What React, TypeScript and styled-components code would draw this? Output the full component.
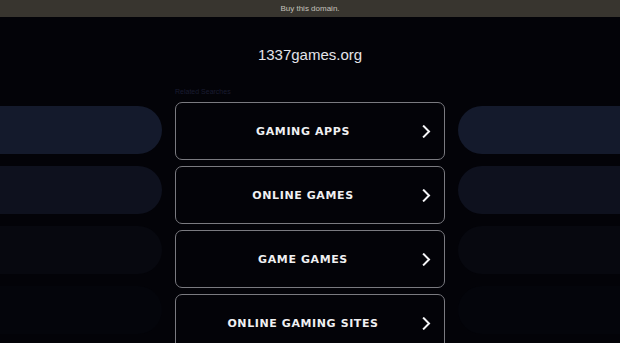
import React from "react";
import styled, { createGlobalStyle } from "styled-components";

const GlobalStyle = createGlobalStyle`
  html, body {
    margin: 0;
    padding: 0;
    background: #030308;
    overflow: hidden;
  }
  body {
    font-family: "Liberation Sans", Arial, sans-serif;
  }
`;

const Page = styled.div`
  width: 620px;
  height: 343px;
  background: #030308;
  overflow: hidden;
`;

const TopBar = styled.div`
  height: 17px;
  background: #38352f;
  color: #c4c2bd;
  font-size: 8px;
  line-height: 17px;
  text-align: center;
`;

const Header = styled.header`
  height: 69px;
  padding-top: 29px;
  box-sizing: border-box;
  text-align: center;
`;

const Domain = styled.h1`
  margin: 0;
  font-size: 15px;
  line-height: 18px;
  font-weight: normal;
  color: #e4e4e8;
`;

const Content = styled.div`
  display: grid;
  grid-template-columns: 1fr 270px 1fr;
  column-gap: 13px;
`;

const Side = styled.div`
  display: flex;
  flex-direction: column;
  gap: 12px;
  padding-top: 20px;
`;

const Pill = styled.div<{ $side: "left" | "right"; $shade: string }>`
  height: 48px;
  background: ${(p) => p.$shade};
  border-radius: ${(p) => (p.$side === "left" ? "0 24px 24px 0" : "24px 0 0 24px")};
`;

const Center = styled.div`
  display: flex;
  flex-direction: column;
`;

const Label = styled.div`
  font-size: 7px;
  line-height: 12px;
  color: #1a1c31;
  margin-bottom: 4px;
`;

const List = styled.div`
  display: flex;
  flex-direction: column;
  gap: 6px;
`;

const LinkBox = styled.a`
  display: flex;
  align-items: center;
  height: 58px;
  box-sizing: border-box;
  border: 1.5px solid #7a7a80;
  border-radius: 7px;
  padding: 1px 13px 0 8px;
  color: #f0f0f2;
  text-decoration: none;
  cursor: pointer;
`;

const LinkText = styled.span`
  flex: 1;
  text-align: center;
  font-family: "DejaVu Sans", Verdana, sans-serif;
  font-weight: bold;
  font-size: 11px;
  letter-spacing: 0.6px;
`;

const Chevron = () => (
  <svg width="9" height="13" viewBox="0 0 9 13" fill="none">
    <path d="M1.8 1.3 L7 6.5 L1.8 11.7" stroke="#f4f4f6" strokeWidth="2" strokeLinecap="square" />
  </svg>
);

const links = ["GAMING APPS", "ONLINE GAMES", "GAME GAMES", "ONLINE GAMING SITES"];
const shades = ["#141a2c", "#0e111e", "#07080f", "#04050b"];

function App() {
  return (
    <Page>
      <GlobalStyle />
      <TopBar>Buy this domain.</TopBar>
      <Header>
        <Domain>1337games.org</Domain>
      </Header>
      <Content>
        <Side>
          {shades.map((s) => (
            <Pill key={s} $side="left" $shade={s} />
          ))}
        </Side>
        <Center>
          <Label>Related Searches</Label>
          <List>
            {links.map((l) => (
              <LinkBox key={l}>
                <LinkText>{l}</LinkText>
                <Chevron />
              </LinkBox>
            ))}
          </List>
        </Center>
        <Side>
          {shades.map((s) => (
            <Pill key={s} $side="right" $shade={s} />
          ))}
        </Side>
      </Content>
    </Page>
  );
}

export default App;
